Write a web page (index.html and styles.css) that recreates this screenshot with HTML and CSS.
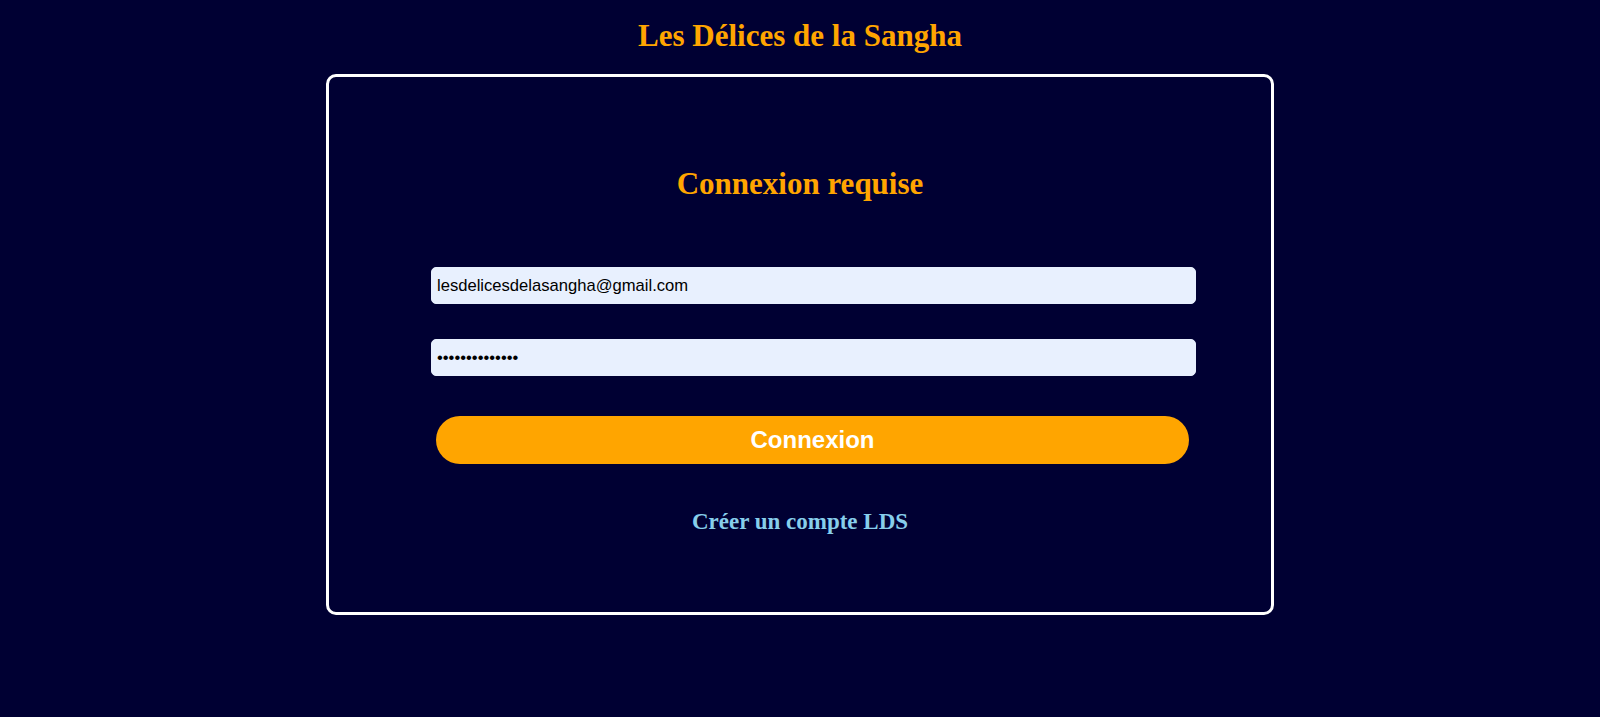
FILE: index.html
```html
<!DOCTYPE html>
<html lang="fr">
<head>
<meta charset="utf-8">
<title>Les Délices de la Sangha</title>
<link rel="stylesheet" href="styles.css">
</head>
<body>
<h1 class="site-title">Les Délices de la Sangha</h1>
<main class="card">
  <h2 class="card-title">Connexion requise</h2>
  <form class="login-form">
    <input class="field" type="email" value="lesdelicesdelasangha@gmail.com">
    <input class="field" type="password" value="motdepasse1234">
    <button class="btn" type="button">Connexion</button>
  </form>
  <a class="signup" href="#">Créer un compte LDS</a>
</main>
</body>
</html>
```
FILE: styles.css
```css
html, body {
  margin: 0;
  padding: 0;
  background: #000033;
  height: 100%;
}
body {
  font-family: "Liberation Serif", "Times New Roman", serif;
  padding-top: 18px;
  box-sizing: border-box;
}
.site-title {
  margin: 0;
  text-align: center;
  color: #FFA500;
  font-size: 31px;
  font-weight: bold;
  line-height: 35px;
}
.card {
  width: 948px;
  box-sizing: border-box;
  margin: 21px auto 0;
  border: 3px solid #ffffff;
  border-radius: 10px;
  padding: 89px 0 78px;
  display: flex;
  flex-direction: column;
  align-items: center;
}
.card-title {
  margin: 0;
  color: #FFA500;
  font-size: 31px;
  font-weight: bold;
  line-height: 35px;
  text-align: center;
}
.login-form {
  align-self: stretch;
  margin: 66px 75px 0 102px;
  display: flex;
  flex-direction: column;
}
.field {
  height: 37px;
  box-sizing: border-box;
  border: 1px solid #e8f0fe;
  border-radius: 5px;
  background: #e8f0fe;
  padding: 0 5px;
  font-family: "Liberation Sans", Arial, sans-serif;
  font-size: 16.6px;
  color: #000;
  outline: none;
}
.field + .field {
  margin-top: 35px;
}
.btn {
  margin: 40px 7px 0 5px;
  height: 48px;
  border: none;
  border-radius: 24px;
  background: #FFA500;
  color: #ffffff;
  font-family: "Liberation Sans", Arial, sans-serif;
  font-weight: bold;
  font-size: 24px;
  cursor: pointer;
}
.signup {
  margin-top: 45px;
  color: #87CEEB;
  font-size: 23px;
  font-weight: bold;
  line-height: 25px;
  text-decoration: none;
}
```
